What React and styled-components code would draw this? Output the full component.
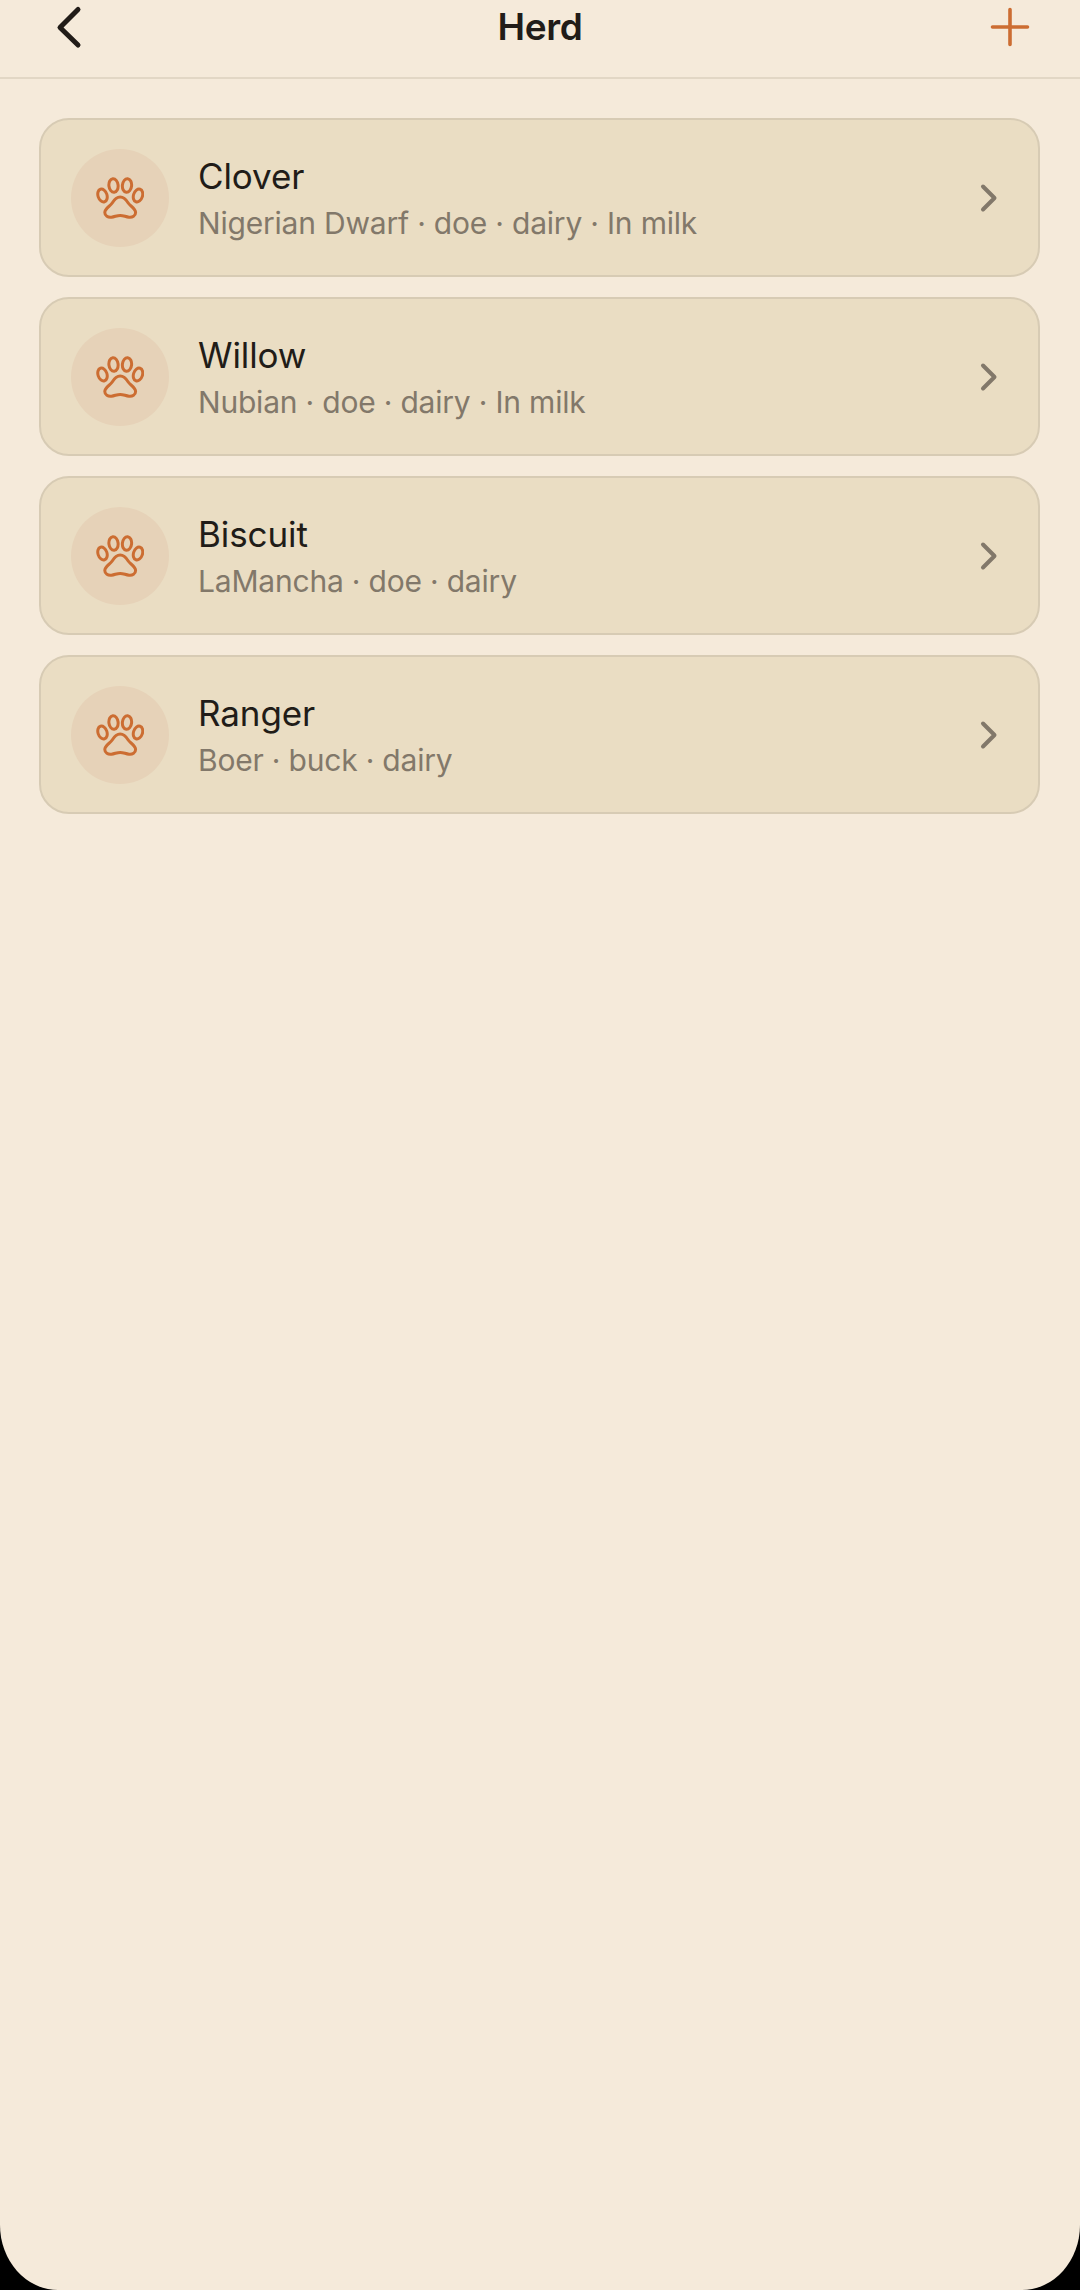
import React from 'react';
import styled, { createGlobalStyle } from 'styled-components';

const GlobalStyle = createGlobalStyle`
  html, body {
    margin: 0;
    padding: 0;
    background: #000;
  }
`;

const Screen = styled.div`
  width: 1080px;
  height: 2290px;
  background: #f5eada;
  border-radius: 0 0 58px 58px / 0 0 65px 65px;
  overflow: hidden;
  font-family: Inter, "Noto Sans", sans-serif;
`;

const TopBar = styled.header`
  display: grid;
  grid-template-columns: 1fr auto 1fr;
  align-items: center;
  padding: 0 50px 23px 50px;
  border-bottom: 2px solid #e2d7c5;
`;

const Title = styled.h1`
  margin: 0;
  font-size: 37px;
  line-height: 54px;
  font-weight: 600;
  letter-spacing: -0.4px;
  color: #211c18;
`;

const IconButton = styled.button`
  width: 40px;
  height: 54px;
  padding: 0;
  border: none;
  background: none;
  display: flex;
  align-items: center;
  justify-content: center;
  justify-self: ${(p) => (p.$end ? 'end' : 'start')};
`;

const List = styled.main`
  display: flex;
  flex-direction: column;
  gap: 20px;
  padding: 39px 40px 0 39px;
`;

const Card = styled.div`
  height: 159px;
  box-sizing: border-box;
  display: flex;
  align-items: center;
  padding: 0 39px 0 30px;
  background: #eaddc3;
  border: 2px solid #d7cbb4;
  border-radius: 30px;
`;

const Avatar = styled.div`
  width: 98px;
  height: 98px;
  flex: none;
  border-radius: 50%;
  background: #e6d2b8;
  display: flex;
  align-items: center;
  justify-content: center;
`;

const Info = styled.div`
  flex: 1;
  margin-left: 29px;
  padding-top: 4px;
  display: flex;
  flex-direction: column;
`;

const Name = styled.div`
  font-size: 35px;
  line-height: 46px;
  color: #211c18;
  letter-spacing: -0.1px;
`;

const Meta = styled.div`
  font-size: 30px;
  line-height: 46px;
  margin-top: 1px;
  color: #82786a;
  letter-spacing: -0.2px;
`;

const BackIcon = () => (
  <svg width="40" height="54" viewBox="0 0 40 54" fill="none">
    <path d="M28 9.5 L10 27.5 L28 45" stroke="#211c18" strokeWidth="5" strokeLinecap="round" strokeLinejoin="round" />
  </svg>
);

const PlusIcon = () => (
  <svg width="40" height="54" viewBox="0 0 40 54" fill="none">
    <path d="M20 9.5 V44.5 M2.5 27 H37.5" stroke="#cc6d32" strokeWidth="3.6" strokeLinecap="round" />
  </svg>
);

const ChevronIcon = () => (
  <svg width="20" height="30" viewBox="0 0 20 30" fill="none">
    <path d="M4 3.5 L15.5 15 L4 26.5" stroke="#82786a" strokeWidth="4" strokeLinecap="round" strokeLinejoin="round" />
  </svg>
);

const PawIcon = () => (
  <svg width="48" height="42" viewBox="0 0 48 42" fill="none" stroke="#cc6d32" strokeWidth="3">
    <ellipse cx="6.5" cy="18.5" rx="4.5" ry="6.6" transform="rotate(-18 6.5 18.5)" />
    <ellipse cx="17.5" cy="8.5" rx="4.6" ry="6.8" transform="rotate(-6 17.5 8.5)" />
    <ellipse cx="31" cy="8.5" rx="4.6" ry="6.8" transform="rotate(6 31 8.5)" />
    <ellipse cx="42" cy="18.5" rx="4.5" ry="6.6" transform="rotate(18 42 18.5)" />
    <path d="M24.2 20 C20 20 18 23 16.2 26 C14.2 29.2 8.8 31.2 8.8 35.6 C8.8 39 12 40.6 15.4 40.2 C18.8 39.8 21 38.4 24.2 38.4 C27.4 38.4 29.6 39.8 33 40.2 C36.4 40.6 39.6 39 39.6 35.6 C39.6 31.2 34.2 29.2 32.2 26 C30.4 23 28.4 20 24.2 20 Z" strokeLinejoin="round" />
  </svg>
);

const goats = [
  { name: 'Clover', meta: 'Nigerian Dwarf · doe · dairy · In milk' },
  { name: 'Willow', meta: 'Nubian · doe · dairy · In milk' },
  { name: 'Biscuit', meta: 'LaMancha · doe · dairy' },
  { name: 'Ranger', meta: 'Boer · buck · dairy' },
];

export default function App() {
  return (
    <Screen>
      <GlobalStyle />
      <TopBar>
        <IconButton><BackIcon /></IconButton>
        <Title>Herd</Title>
        <IconButton $end><PlusIcon /></IconButton>
      </TopBar>
      <List>
        {goats.map((goat) => (
          <Card key={goat.name}>
            <Avatar><PawIcon /></Avatar>
            <Info>
              <Name>{goat.name}</Name>
              <Meta>{goat.meta}</Meta>
            </Info>
            <ChevronIcon />
          </Card>
        ))}
      </List>
    </Screen>
  );
}
